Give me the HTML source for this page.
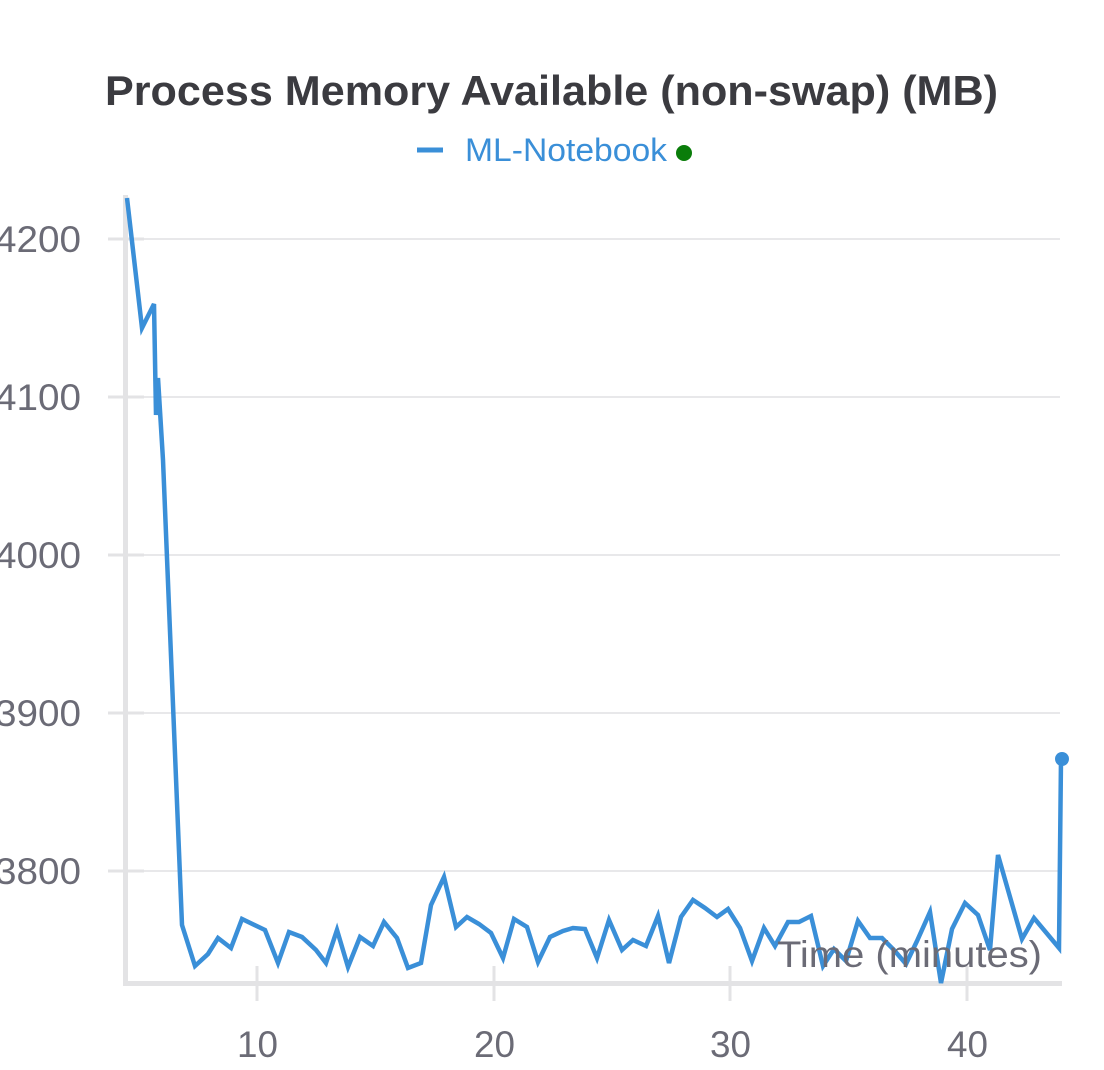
<!DOCTYPE html>
<html><head><style>
body{margin:0;background:#fff;width:1104px;height:1065px;overflow:hidden}
</style></head><body>
<svg width="1104" height="1065" xmlns="http://www.w3.org/2000/svg" font-family="Liberation Sans, sans-serif">
<text x="105" y="105" textLength="893" lengthAdjust="spacingAndGlyphs" font-size="42" font-weight="bold" fill="#3b3b40">Process Memory Available (non-swap) (MB)</text>
<line x1="417" y1="150" x2="443" y2="150" stroke="#3a8fd8" stroke-width="5"/>
<text x="465" y="161" textLength="202" lengthAdjust="spacingAndGlyphs" font-size="32" fill="#3a8fd8">ML-Notebook</text>
<circle cx="684" cy="153" r="8" fill="#0a7d0a"/>
<g stroke="#e8e8ea" stroke-width="2">
<line x1="108" y1="239" x2="1060" y2="239"/>
<line x1="108" y1="397" x2="1060" y2="397"/>
<line x1="108" y1="555" x2="1060" y2="555"/>
<line x1="108" y1="713" x2="1060" y2="713"/>
<line x1="108" y1="871" x2="1060" y2="871"/>
</g>
<g stroke="#e3e3e5" stroke-width="3">
<line x1="108" y1="239" x2="144" y2="239"/>
<line x1="108" y1="397" x2="144" y2="397"/>
<line x1="108" y1="555" x2="144" y2="555"/>
<line x1="108" y1="713" x2="144" y2="713"/>
<line x1="108" y1="871" x2="144" y2="871"/>
<line x1="257" y1="966" x2="257" y2="1001"/>
<line x1="494" y1="966" x2="494" y2="1001"/>
<line x1="730" y1="966" x2="730" y2="1001"/>
<line x1="967" y1="966" x2="967" y2="1001"/>
</g>
<line x1="125.5" y1="195" x2="125.5" y2="985" stroke="#e3e3e5" stroke-width="5"/>
<line x1="123" y1="983.5" x2="1062" y2="983.5" stroke="#e3e3e5" stroke-width="5"/>
<g font-size="37" fill="#6b6b76">
<text x="-5" y="252" textLength="86" lengthAdjust="spacingAndGlyphs">4200</text>
<text x="-5" y="410" textLength="86" lengthAdjust="spacingAndGlyphs">4100</text>
<text x="-5" y="568" textLength="86" lengthAdjust="spacingAndGlyphs">4000</text>
<text x="-5" y="726" textLength="86" lengthAdjust="spacingAndGlyphs">3900</text>
<text x="-5" y="884" textLength="86" lengthAdjust="spacingAndGlyphs">3800</text>
</g>
<g font-size="37" fill="#6b6b76">
<text x="237" y="1057" textLength="41" lengthAdjust="spacingAndGlyphs">10</text>
<text x="474" y="1057" textLength="41" lengthAdjust="spacingAndGlyphs">20</text>
<text x="710" y="1057" textLength="41" lengthAdjust="spacingAndGlyphs">30</text>
<text x="947" y="1057" textLength="41" lengthAdjust="spacingAndGlyphs">40</text>
</g>
<polyline fill="none" stroke="#3a8fd8" stroke-width="4.5" stroke-linejoin="miter" points="127,198 142,328 154,304 156,415 158,378 163,460 182,925 195,966 208,954 218,938 231,948 242,919 265,930 278,963 289,932 302,937 316,950 326,963 337,930 348,967 360,937 373,946 384,922 397,938 408,968 421,963 431,905 444,877 456,927 467,917 479,924 491,933 503,958 514,919 527,927 538,962 550,937 563,931 573,928 585,929 597,958 609,920 622,950 633,940 646,946 658,916 669,963 681,917 693,900 705,908 717,917 728,909 740,928 752,961 764,928 775,946 788,922 799,922 811,916 823,966 834,949 846,961 858,921 870,938 882,938 894,950 906,964 917,941 930,912 941,983 952,929 965,903 978,915 990,950 998,855 1022,939 1034,918 1059,948 1061,759"/>
<circle cx="1062" cy="759" r="7" fill="#3a8fd8"/>
<text x="777" y="967" textLength="265" lengthAdjust="spacingAndGlyphs" font-size="37" fill="#6b6b76">Time (minutes)</text>
</svg>
</body></html>
